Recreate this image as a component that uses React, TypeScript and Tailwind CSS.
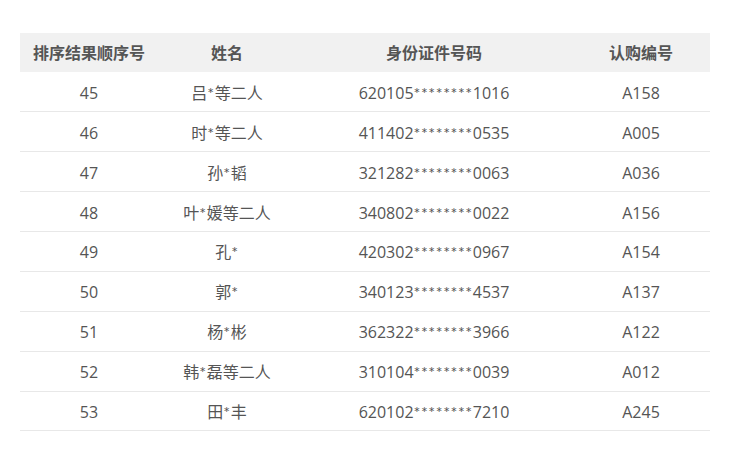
import React from "react";

const rows = [
  ["45", "吕*等二人", "620105********1016", "A158"],
  ["46", "时*等二人", "411402********0535", "A005"],
  ["47", "孙*韬", "321282********0063", "A036"],
  ["48", "叶*媛等二人", "340802********0022", "A156"],
  ["49", "孔*", "420302********0967", "A154"],
  ["50", "郭*", "340123********4537", "A137"],
  ["51", "杨*彬", "362322********3966", "A122"],
  ["52", "韩*磊等二人", "310104********0039", "A012"],
  ["53", "田*丰", "620102********7210", "A245"],
];

function Cell({ text }: { text: string }) {
  const parts = text.split(/(\*+)/);
  return (
    <>
      {parts.map((p, i) =>
        p.startsWith("*") ? (
          <span key={i} className="tracking-[0.6px]" style={{ fontFamily: "Lato, sans-serif" }}>
            {p}
          </span>
        ) : (
          <React.Fragment key={i}>{p}</React.Fragment>
        )
      )}
    </>
  );
}

export default function App() {
  return (
    <div
      className="w-[729px] h-[453px] bg-white pt-[33px] px-[20px] text-[#555]"
      style={{ fontFamily: '"Open Sans", "Noto Sans CJK SC", sans-serif' }}
    >
      <table className="w-[690px] border-collapse table-fixed text-[16px]">
        <colgroup>
          <col className="w-[138px]" />
          <col className="w-[138px]" />
          <col className="w-[276px]" />
          <col className="w-[138px]" />
        </colgroup>
        <thead>
          <tr className="bg-[#f1f1f1] h-[39px]">
            <th className="font-bold text-center p-0 pt-[1px]">排序结果顺序号</th>
            <th className="font-bold text-center p-0 pt-[1px]">姓名</th>
            <th className="font-bold text-center p-0 pt-[1px]">身份证件号码</th>
            <th className="font-bold text-center p-0 pt-[1px]">认购编号</th>
          </tr>
        </thead>
        <tbody>
          {rows.map((r) => (
            <tr key={r[0]} className="h-[39.875px] border-b border-[#e8e8e8]">
              {r.map((c, i) => (
                <td key={i} className="text-center p-0 pt-[2px]">
                  <Cell text={c} />
                </td>
              ))}
            </tr>
          ))}
        </tbody>
      </table>
    </div>
  );
}
